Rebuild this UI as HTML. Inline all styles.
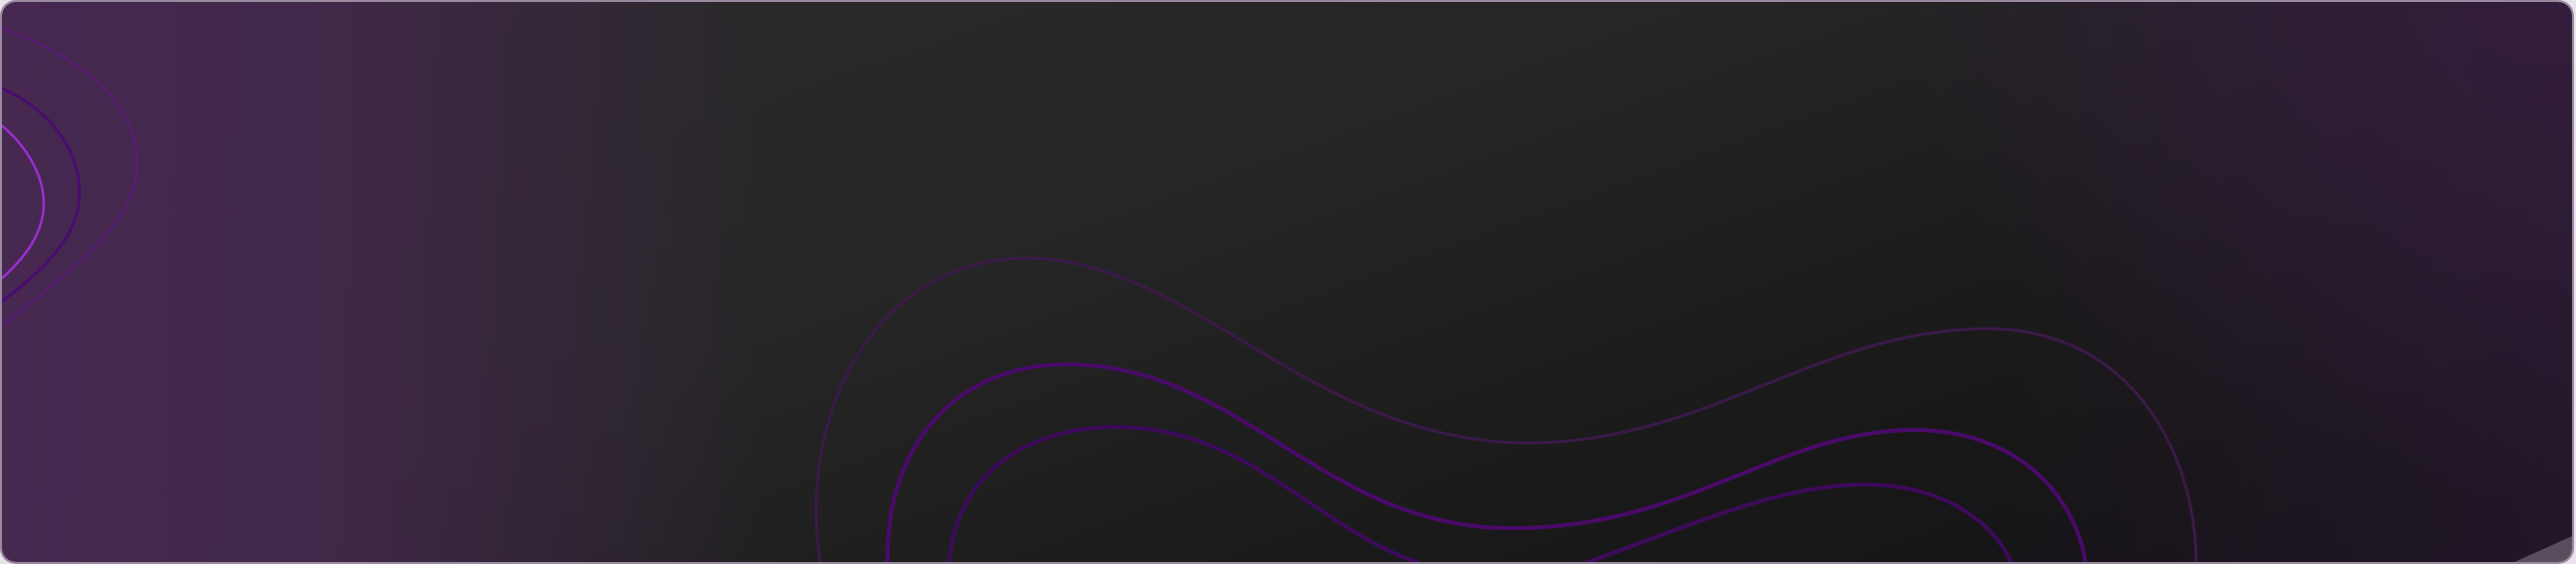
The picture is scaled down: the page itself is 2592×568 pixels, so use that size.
<!DOCTYPE html>
<html><head><style>
html,body{margin:0;padding:0;width:2592px;height:568px;overflow:hidden;background:#e9e4ec;}
.card{position:absolute;left:2px;top:2px;width:2586px;height:564px;border-radius:14px;overflow:hidden;
background:
 linear-gradient(90deg, rgba(70,40,80,1) 0%, rgba(68,40,78,0.9) 12%, rgba(40,40,40,0) 30%, rgba(0,0,0,0) 78%, rgba(50,28,60,0.5) 100%),
 radial-gradient(ellipse 700px 500px at 100% 0%, rgba(55,30,65,0.85), rgba(55,30,65,0) 100%),
 linear-gradient(160deg,#2a2a2a 0%,#262626 40%,#1a1a1a 70%,#121014 100%);
box-shadow:0 0 0 2px #9a8aa0;}
svg{position:absolute;left:0;top:0}
</style></head><body>
<div class="card">
<svg width="2586" height="564" viewBox="2 2 2586 564" fill="none">
 <path d="M0,28 C90,60 140,110 138,168 C136,230 60,280 0,330" stroke="#5a1c78" stroke-width="2.5" opacity="0.9"/>
 <path d="M0,88 C50,110 80,150 80,195 C80,240 40,275 0,305" stroke="#4a0c70" stroke-width="3"/>
 <path d="M0,125 C25,145 44,175 44,205 C44,235 25,260 0,282" stroke="#9a2ed0" stroke-width="2.5"/>
 <path d="M826,570 C800,420 880,260 1033,260 C1200,260 1320,446 1537,446 C1720,446 1830,331 2000,331 C2140,331 2210,450 2210,570" stroke="#3a1a48" stroke-width="3"/>
 <path d="M893,570 C890,450 960,367 1074,367 C1250,367 1330,532 1521,532 C1700,532 1790,433 1926,433 C2030,433 2090,500 2099,570" stroke="#4a0a6a" stroke-width="4"/>
 <path d="M955,570 C960,480 1030,430 1124,430 C1260,430 1330,540 1438,570 M1587,570 C1700,530 1790,488 1876,488 C1960,488 2010,530 2025,570" stroke="#3e0a5a" stroke-width="4"/>
 <path d="M2530,566 L2588,540 L2588,566 Z" fill="#c0b8c4" opacity="0.35"/>
</svg>
</div>
</body></html>
